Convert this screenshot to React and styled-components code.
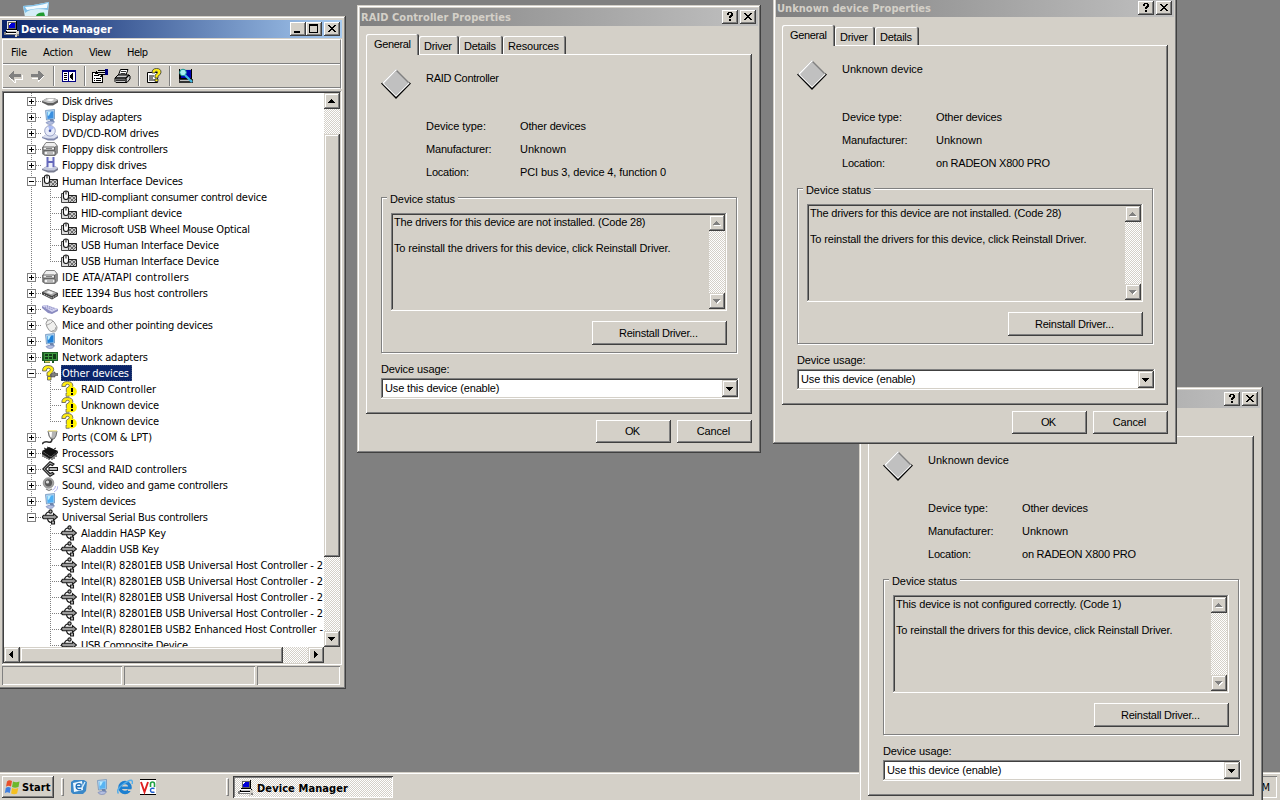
import React, { useLayoutEffect, useRef, useState } from "react";
import styled, { createGlobalStyle, css } from "styled-components";

const FACE = "#d4d0c8";
const UI = `"DejaVu Sans Condensed", "DejaVu Sans", sans-serif`;
const SANS = `"Liberation Sans", Arial, sans-serif`;

const GlobalStyle = createGlobalStyle`
  * { box-sizing: border-box; }
  html, body { margin: 0; padding: 0; height: 100%; overflow: hidden; }
  svg { display: block; flex: none; }
`;

const raised = css`
  background: ${FACE};
  box-shadow: inset -1px -1px #404040, inset 1px 1px #fff, inset -2px -2px #808080;
`;
const scrollRaised = css`
  background: ${FACE};
  box-shadow: inset -1px -1px #404040, inset 1px 1px ${FACE}, inset -2px -2px #808080, inset 2px 2px #fff;
`;
const sunken = css`
  box-shadow: inset -1px -1px #fff, inset 1px 1px #808080, inset -2px -2px ${FACE}, inset 2px 2px #404040;
`;
const checker = css`
  background: repeating-conic-gradient(#fff 0 25%, ${FACE} 0 50%) 0 0 / 2px 2px;
`;

const FitSpan = styled.span`
  display: inline-block;
  white-space: pre;
`;

const WIDTHS = {
  File: 16, Action: 30, View: 22, Help: 21,
  "Disk drives": 51,
  "Display adapters": 80,
  "DVD/CD-ROM drives": 97,
  "Floppy disk controllers": 106,
  "Floppy disk drives": 85,
  "Human Interface Devices": 121,
  "HID-compliant consumer control device": 186,
  "HID-compliant device": 101,
  "Microsoft USB Wheel Mouse Optical": 169,
  "USB Human Interface Device": 138,
  "IDE ATA/ATAPI controllers": 127,
  "IEEE 1394 Bus host controllers": 146,
  "Keyboards": 51,
  "Mice and other pointing devices": 151,
  "Monitors": 41,
  "Network adapters": 86,
  "Ports (COM & LPT)": 90,
  "Processors": 52,
  "SCSI and RAID controllers": 125,
  "Sound, video and game controllers": 166,
  "System devices": 74,
  "Universal Serial Bus controllers": 146,
  "Aladdin HASP Key": 85,
  "Aladdin USB Key": 78,
  "Intel(R) 82801EB USB Universal Host Controller - 2": 242,
  "Intel(R) 82801EB USB2 Enhanced Host Controller -": 242,
  "USB Composite Device": 107,
  "PCI bus 3, device 4, function 0": 146,
  "on RADEON X800 PRO": 114,
  "Device status": 65,
  "Device type:": 60,
  "Manufacturer:": 65.5,
  "Location:": 43,
  "Unknown": 46,
  "The drivers for this device are not installed. (Code 28)": 251.5,
  "This device is not configured correctly. (Code 1)": 225.5,
  "To reinstall the drivers for this device, click Reinstall Driver.": 276.5,
  "Reinstall Driver...": 79,
  "Device usage:": 68.5,
  "Use this device (enable)": 114.5,
  OK: 15, Cancel: 33.5,
  General: 37, Driver: 28, Details: 32, Resources: 51,
};

const Fit = ({ children, w = WIDTHS[children] }) => {
  const ref = useRef(null);
  const [spacing, setSpacing] = useState(0);
  useLayoutEffect(() => {
    if (!w) return;
    const natural = ref.current.getBoundingClientRect().width;
    setSpacing((w - natural) / (children.length - 1));
  }, [w, children]);
  return (
    <FitSpan ref={ref} style={{ letterSpacing: spacing, marginRight: -spacing }}>
      {children}
    </FitSpan>
  );
};

const Desktop = styled.main`
  position: relative;
  width: 1280px;
  height: 800px;
  overflow: hidden;
  background: #808080;
  color: #000;
  font: 11px/13px ${UI};
  white-space: nowrap;
`;

const WindowFrame = styled.section`
  position: absolute;
  isolation: isolate;
  left: ${(p) => p.$x}px;
  top: ${(p) => p.$y}px;
  width: ${(p) => p.$w}px;
  height: ${(p) => p.$h}px;
  padding: ${(p) => p.$frame}px;
  display: flex;
  flex-direction: column;
  background: ${FACE};
  box-shadow: inset -1px -1px #404040, inset 1px 1px ${FACE}, inset -2px -2px #808080, inset 2px 2px #fff;
`;

const TitleBar = styled.header`
  height: 18px;
  flex: none;
  display: flex;
  align-items: center;
  padding: 0 2px 0 ${(p) => (p.$active ? 2 : 1)}px;
  color: ${(p) => (p.$active ? "#fff" : FACE)};
  background: ${(p) =>
    p.$active ? "linear-gradient(90deg, #0a246a, #a6caf0)" : "linear-gradient(90deg, #808080, #c0c0c0)"};
`;

const TitleText = styled.span`
  flex: 1;
  margin-left: ${(p) => p.$gap || 0}px;
  font-weight: bold;
`;

const CaptionButton = styled.button`
  width: 16px;
  height: 14px;
  padding: 0;
  border: 0;
  margin-left: ${(p) => p.$gap || 0}px;
  ${raised}
`;

/* ---------- Properties dialog ---------- */

const TabStrip = styled.nav`
  display: flex;
  align-items: flex-end;
  height: 20px;
  margin: 8px 6px 0;
  font-family: ${SANS};
`;

const Tab = styled.div`
  position: relative;
  width: ${(p) => p.$w}px;
  height: ${(p) => (p.$selected ? 21 : 18)}px;
  margin-bottom: ${(p) => (p.$selected ? -1 : 0)}px;
  z-index: ${(p) => (p.$selected ? 1 : 0)};
  padding: 4px ${(p) => (p.$selected ? 0 : 2)}px 0 0;
  text-align: center;
  background: ${FACE};
  border-radius: 2px 2px 0 0;
  box-shadow: inset -1px 0 #404040, inset 1px 1px #fff, inset -2px 0 #808080;
`;

const Page = styled.div`
  width: 386px;
  height: 360px;
  margin: 0 6px;
  padding: 15px 13px 0 15px;
  font-family: ${SANS};
  ${raised}
`;

const DeviceHeader = styled.div`
  display: flex;
  gap: 15px;
  height: 30px;
  line-height: 18px;
`;

const Facts = styled.dl`
  display: grid;
  grid-template-columns: 94px 1fr;
  grid-auto-rows: 23px;
  align-items: center;
  margin: 16px 0 0;
  padding-left: 45px;
  dd { margin: 0; }
`;

const GroupBox = styled.div`
  width: 356px;
  height: 156px;
  margin-top: 13px;
  padding-left: 9px;
  border: 1px solid #808080;
  box-shadow: 1px 1px #fff, inset 1px 1px #fff;
`;

const GroupLabel = styled.div`
  width: 71px;
  margin: -5px 0 7px -4px;
  padding-left: 3px;
  background: ${FACE};
`;

const StatusBox = styled.div`
  display: flex;
  width: 336px;
  height: 98px;
  padding: 2px;
  ${sunken}
`;

const StatusText = styled.div`
  flex: 1;
  display: grid;
  grid-auto-rows: 26px;
  justify-items: start;
  padding: 1px;
`;

const ScrollColumn = styled.div`
  width: 16px;
  flex: none;
  display: flex;
  flex-direction: column;
  justify-content: space-between;
  ${checker}
`;

const ScrollButton = styled.button`
  width: 16px;
  height: ${(p) => p.$h || 16}px;
  flex: none;
  padding: 0;
  border: 0;
  ${scrollRaised}
`;

const ButtonRow = styled.div`
  display: flex;
  justify-content: flex-end;
  gap: 6px;
  margin: ${(p) => p.$m};
`;

const PushButton = styled.button`
  width: ${(p) => p.$w}px;
  height: ${(p) => p.$h}px;
  padding: 0 2px 0 0;
  border: 0;
  font: 11px/13px ${SANS};
  color: #000;
  ${raised}
`;

const FieldLabel = styled.div`
  margin: 10px 0 2px;
`;

const Combo = styled.div`
  display: flex;
  align-items: center;
  justify-content: space-between;
  width: 358px;
  height: 21px;
  padding: 2px 1px 2px 4px;
  background: #fff;
  line-height: 15px;
  ${sunken}
`;

/* ---------- Device manager ---------- */

const Rebar = styled.div`
  margin: 1px 1px 0 0;
  border: 1px solid #fff;
  border-right-color: #808080;
  box-shadow: 1px 0 #fff;
  flex: none;
`;

const MenuBar = styled.nav`
  display: flex;
  height: 24px;
  align-items: center;
  padding: 2px 0 0 8px;
  border-bottom: 1px solid #808080;
`;

const MenuItem = styled.span`
  width: ${(p) => p.$w}px;
`;

const ToolBar = styled.div`
  display: flex;
  height: 24px;
  align-items: center;
  padding-left: 4px;
  border-top: 1px solid #fff;
  border-bottom: 1px solid #808080;
`;

const ToolIcon = styled.span`
  margin-left: ${(p) => p.$gap || 0}px;
`;

const ToolDivider = styled.i`
  width: 2px;
  height: 20px;
  margin-left: ${(p) => p.$gap}px;
  border-left: 1px solid #808080;
  border-right: 1px solid #fff;
`;

const TreePane = styled.div`
  height: 574px;
  margin-top: 2px;
  padding: 2px;
  flex: none;
  display: grid;
  grid-template: 554px 16px / 320px 16px;
  ${sunken}
`;

const Tree = styled.ul`
  margin: 0;
  padding: 0;
  list-style: none;
  overflow: hidden;
  background: #fff;
`;

const TreeRow = styled.li`
  display: flex;
  height: 16px;
  line-height: 17px;
`;

const TreeLabel = styled.span`
  height: 16px;
  margin-left: 3px;
  padding: 0 1px;
  ${(p) => p.$selected && "background: #0a246a; color: #fff; outline: 1px dotted #3a4c74; outline-offset: -1px; padding-right: 3px;"}
`;

const Track = styled.div`
  display: flex;
  flex-direction: ${(p) => (p.$vertical ? "column" : "row")};
  ${checker}
`;

const Thumb = styled.div`
  ${scrollRaised}
  ${(p) => (p.$vertical ? "height: 423px; margin: 25px 0 74px;" : "width: 263px; margin-right: 25px;")}
`;

const StatusBar = styled.footer`
  display: grid;
  grid-template-columns: 120px 131px 83px;
  gap: 2px;
  height: 19px;
  margin-top: 1px;
`;

const StatusPanel = styled.div`
  box-shadow: inset 1px 1px #808080, inset -1px -1px #fff;
`;

/* ---------- Taskbar ---------- */

const TaskBar = styled.footer`
  position: absolute;
  inset: 772px 0 0 0;
  display: flex;
  align-items: center;
  padding: 2px 3px 0 2px;
  background: ${FACE};
  box-shadow: inset 0 1px ${FACE}, inset 0 2px #fff;
`;

const StartButton = styled.button`
  display: flex;
  align-items: center;
  gap: 2px;
  width: 52px;
  height: 22px;
  padding: 0 0 0 2px;
  border: 0;
  font: bold 11px/13px ${UI};
  color: #000;
  ${raised}
`;

const Grip = styled.i`
  width: 3px;
  height: 18px;
  margin-left: ${(p) => p.$gap}px;
  border: 1px solid #fff;
  border-right-color: #808080;
  border-bottom-color: #808080;
`;

const QuickLaunch = styled.div`
  display: flex;
  gap: 7px;
  margin-left: 7px;
`;

const TaskButton = styled.div`
  display: flex;
  align-items: center;
  gap: 3px;
  width: 160px;
  height: 22px;
  margin-left: 4px;
  padding: 2px 0 0 5px;
  font-weight: bold;
  ${checker}
  box-shadow: inset 1px 1px #404040, inset -1px -1px #fff, inset 2px 2px #808080;
`;

const Tray = styled.div`
  width: 90px;
  height: 22px;
  margin-left: auto;
  padding: 5px 7px 0 0;
  text-align: right;
  box-shadow: inset 1px 1px #808080, inset -1px -1px #fff;
`;

const BinSlot = styled.div`
  position: absolute;
  left: 22px;
  top: 1px;
`;

/* ---------- Drawings ---------- */

const Svg = ({ w = 16, h = w, crisp, children }) => (
  <svg width={w} height={h} viewBox={`0 0 ${w} ${h}`} shapeRendering={crisp ? "crispEdges" : "auto"}>
    {children}
  </svg>
);

const Glyph = {
  close: (
    <Svg w={16} h={14} crisp>
      <path d="M4 3h2v1h1v1h2v-1h1v-1h2v1h-1v1h-1v1h-1v1h1v1h1v1h1v1h-2v-1h-1v-1h-2v1h-1v1h-2v-1h1v-1h1v-1h1v-1h-1v-1h-1v-1h-1z" />
    </Svg>
  ),
  help: (
    <Svg w={16} h={14} crisp>
      <path d="M6 2h4v1h1v3h-1v1h-1v1h-2v-2h1v-1h1v-2h-2v2h-2v-2h1zM7 9h2v2h-2z" />
    </Svg>
  ),
  min: (
    <Svg w={16} h={14} crisp>
      <path d="M4 9h6v2h-6z" />
    </Svg>
  ),
  max: (
    <Svg w={16} h={14} crisp>
      <path d="M3 2h9v9h-9zM4 4v6h7v-6z" fillRule="evenodd" />
    </Svg>
  ),
};

const ARROWS = {
  up: "M7 6h1v1h1v1h1v1h1v1h-7v-1h1v-1h1v-1h1z",
  down: "M4 6h7v1h-1v1h-1v1h-1v1h-1v-1h-1v-1h-1v-1h-1z",
  left: "M9 4v7h-1v-1h-1v-1h-1v-1h-1v-1h1v-1h1v-1h1v-1z",
  right: "M6 4v7h1v-1h1v-1h1v-1h1v-1h-1v-1h-1v-1h-1v-1z",
};

const Arrow = ({ dir, disabled }) => (
  <Svg crisp>
    {disabled && <path d={ARROWS[dir]} fill="#fff" transform="translate(1 1)" />}
    <path d={ARROWS[dir]} fill={disabled ? "#808080" : "#000"} />
  </Svg>
);

const PcIcon = () => (
  <Svg crisp>
    <path d="M3 0h10v9h-10z" fill="#000" />
    <path d="M3 0h9v8h-9z" fill="#e8e6e0" />
    <path d="M4 1h8v7h-8z" fill="#606060" />
    <path d="M5 2h6v5h-6z" fill="#0000d8" />
    <path d="M5 2h2v1h-1v1h-1z" fill="#fff" />
    <path d="M2 9h12v5h-12z" fill="#000" />
    <path d="M2 9h11v1h-11zM1 12h11v1h-11z" fill="#fff" />
    <path d="M3 10h9v1h-9z" fill="#c0c0c0" />
    <path d="M12 10h3v4h-2v2h-2v-2h1z" fill="#d4d0c8" />
    <path d="M0 11h2v2h-2zM0 13h12v1h-12z" fill="#808080" />
    <path d="M13 13h2v2h-2z" fill="#808080" />
  </Svg>
);

const DiamondIcon = () => (
  <Svg w={30}>
    <path d="M0 14.500L15 30L30 14.500L28 13L15 26L2 13z" fill="#000" />
    <path d="M15 0L29 14L15 28L1 14z" fill="#808080" />
    <path d="M1 14L15 0L16 1L3 15z" fill="#fff" />
    <path d="M15 2L27 14L15 26L3 14z" fill="#c0c0c0" />
    <path d="M2.500 14.500L15 27L28 14" fill="none" stroke="#f4f4f4" strokeWidth="1.200" />
  </Svg>
);

const BinIcon = () => (
  <Svg w={28} h={34}>
    <path d="M1 5Q14 4 27 1L24 33H6z" fill="#d5eef7" />
    <path d="M1 5Q14 4 27 1L26 9Q10 6 3 12z" fill="#7fc0e8" />
    <path d="M3 6Q16 5 26 2L25 7Q14 7 5 9z" fill="#f2fbff" />
    <path d="M14 15q1-4 8-3.500l1 3.500h-4l-2 2z" fill="#1f9a2e" />
  </Svg>
);

const Monitor = ({ body = "#3a8fe0" }) => (
  <Svg>
    <path d="M3.500 1.500l9-1v9.500l-8 1z" fill="#b4d4f0" stroke="#6f93bb" strokeWidth=".8" />
    <path d="M5 3l6.500-.8v7l-6 .8z" fill={body} />
    <path d="M5.500 3l3.500-.4-2 4-1.300.2z" fill="#b9ecff" />
    <path d="M8 10h3l1.500 3h-4.500z" fill="#6c84ac" />
    <path d="M4 13.500q4-2.500 8.500-.5q-2 3-5 2.500q-3-.3-3.500-2z" fill="#b4bfe0" stroke="#6d7db0" strokeWidth=".6" />
  </Svg>
);

const Controller = () => (
  <Svg>
    <path d="M4 2h8l4 3v7l-3 3h-9l-4-2v-6z" fill="#8c8c8c" />
    <path d="M4 1.500h8.500l2.500 3-2.500 2h-12z" fill="#f0f0f0" stroke="#777" strokeWidth=".9" />
    <path d="M1 6h11.500v3h-11.500zM2 10h11v4h-11z" fill="#f2f2f2" stroke="#555" strokeWidth=".9" />
    <path d="M5 12h6M4 7.500h6" stroke="#777" strokeWidth=".9" />
  </Svg>
);

const ICONS = {
  disk: (
    <Svg>
      <path d="M0 8l5-3h7l4 2v2.500l-5 3h-5l-6-3z" fill="#5d5d5d" />
      <path d="M0 8l5-3h7l4 2-5 3h-5z" fill="#c0c0c0" />
      <path d="M4 7.300l3-1.300h4l1 1-3 1.300z" fill="#fff" />
    </Svg>
  ),
  display: <Monitor />,
  dvd: (
    <Svg>
      <path d="M0 12l5-3h8l3 2v2l-4 2.500h-6l-6-2.500z" fill="#8088ac" />
      <path d="M0 12l5-3h8l3 2-4 2.500h-6z" fill="#dadff0" />
      <circle cx="8" cy="5.800" r="5.300" fill="#e8ecfa" stroke="#8f99c0" strokeWidth=".9" />
      <path d="M8 6L6 1q4-1 6 2z" fill="#a8baf4" />
      <circle cx="8" cy="5.800" r="1.300" fill="#4b5aa6" />
    </Svg>
  ),
  fdc: <Controller />,
  floppy: (
    <Svg>
      <path d="M0 12l5-3h8l3 2v2l-4 2.500h-6l-6-2.500z" fill="#777b8f" />
      <path d="M0 12l5-3h8l3 2-4 2.500h-6z" fill="#c4c8dc" />
      <path d="M4.500 0h8v10h-8z" fill="#6468bc" />
      <path d="M6.500 0h4v4h-4zM6.500 6h4v5h-4z" fill="#eceefa" />
    </Svg>
  ),
  hid: (
    <Svg>
      <path d="M7 6.500h8.500v7h-8.500z" fill="#c8c8c8" stroke="#222" />
      <path d="M8 8l5 5M11 7l4 4M15 7l-6 6M11 7l-3 3M15 10l-3 3" stroke="#555" strokeWidth=".8" />
      <path d="M2 4.500h-1.500v9h7v-3" fill="#dcdcdc" stroke="#444" />
      <path d="M2.500 4q0-2 2.500-2t2.500 2v4q0 2.500-2.500 2.500t-2.500-2.500z" fill="#fff" stroke="#111" strokeWidth="1.100" />
      <path d="M5 2v3.500" stroke="#111" />
    </Svg>
  ),
  ieee: (
    <Svg>
      <path d="M0 7l6-3 10 4v3l-6 3.500-10-5z" fill="#444" />
      <path d="M1 7l5-2.500 9 3.500-5 3z" fill="#a9a9a9" />
      <path d="M4 7.300l3-1.500 5 2-3 1.500z" fill="#eee" />
      <path d="M2 9.500l8 3.500 5-3" stroke="#ddd" fill="none" strokeDasharray="1 1" />
    </Svg>
  ),
  keyboard: (
    <Svg>
      <path d="M0 5l4-1 12 4v2l-6 3-4-1-6-5z" fill="#8a8bc0" />
      <path d="M0 5l4-1 12 4-6 3z" fill="#d4d4f0" />
      <path d="M3 6l8 3M5 5l8 3" stroke="#7c7db8" strokeDasharray="1 1" />
    </Svg>
  ),
  mouse: (
    <Svg>
      <path d="M1 2q4-3 5 3" stroke="#aaa" fill="none" />
      <path d="M5 4q4-3 7 1l3 5q0 5-4 5t-6-5q-2-4 0-6z" fill="#f0f0ee" stroke="#999" />
      <path d="M5 8q4-1 6-4M14 10q0 4-4 4" stroke="#a5a5a5" fill="none" />
    </Svg>
  ),
  monitor: <Monitor body="#1f80d8" />,
  network: (
    <Svg>
      <path d="M0 3h16v9h-4v2h-2v-2h-2v2h-6v-2h-2z" fill="#1e5b25" />
      <path d="M2 4h13v7h-13z" fill="#3e9a40" />
      <path d="M3 5h3v2h-3zM7 5h3v2h-3zM3 8h3v2h-3zM11 5h3v5h-3zM7 8h3v2h-3z" fill="#123b18" />
      <path d="M3 12h5v1.500h-5z" fill="#e2d264" />
    </Svg>
  ),
  other: (
    <Svg>
      <path d="M9 8.500h2l1-1.500h1v1.500h3v2h-3v1.500h-4z" fill="#808080" stroke="#333" strokeWidth=".5" />
      <path d="M.5 6q0-5.500 5.500-5.500t5.700 4.200q0 2.300-3.200 4.300v2h-3.500v-3.500q3.300-1.300 3.300-2.800t-2-1.500-2 2.800z" fill="#ffee10" stroke="#555" strokeWidth=".8" />
      <path d="M5.500 11.500h3.500v3.500h-3.500z" fill="#ffee10" stroke="#555" strokeWidth=".8" />
    </Svg>
  ),
  unknown: (
    <Svg>
      <path d="M.8 5.500q0-5 5.400-5t5.600 4q0 2.300-3.200 4v2.300h-3.300v-3.500q3-1.500 3-2.700t-1.900-1.300-1.900 2.200z" fill="#ffee10" stroke="#555" strokeWidth=".8" />
      <path d="M5 12h3.300v3.300h-3.300z" fill="#ffee10" stroke="#555" strokeWidth=".7" />
      <circle cx="10.800" cy="10.500" r="5" fill="#fff200" />
      <path d="M10 7h2v4h-2zM10 12h2v2h-2z" fill="#000" />
    </Svg>
  ),
  ports: (
    <Svg>
      <path d="M6 2h9l-1 5-2 3h-3l-2-3z" fill="#b4b4b4" stroke="#555" strokeWidth=".8" />
      <path d="M7 3h3l-.5 5h-1z" fill="#fff" />
      <path d="M6 1h9v1.500h-9z" fill="#f2e8a0" />
      <path d="M10 10q0 4-4 3t-6 2" stroke="#333" strokeWidth="1.600" fill="none" />
    </Svg>
  ),
  cpu: (
    <Svg>
      <path d="M0 6l7-4 9 4-7 6z" fill="#111" />
      <path d="M0 6v3l8 5 8-6v-2l-7 6z" fill="#222" />
      <path d="M1 8v4M3 9v4M5 10v4M7 12v3M10 12v3M12 10v4M14 8v4" stroke="#111" />
      <path d="M4 4l-2-1M7 3l-2-1M12 4l2-1" stroke="#222" />
    </Svg>
  ),
  scsi: (
    <Svg>
      <path d="M12 3l-4-2.300-7.300 7.300 7.300 7.300 4-2.300-1.500-1.500-2.500 1-4.500-4.500 4.500-4.500 2.500 1z" fill="#a8a8a8" stroke="#1a1a1a" strokeWidth="1.100" />
      <path d="M7 6.500h8.500v3h-8.500z" fill="#b8b8b8" stroke="#1a1a1a" strokeWidth="1.100" />
    </Svg>
  ),
  sound: (
    <Svg>
      <circle cx="6.500" cy="6" r="5.300" fill="#a4a4a4" stroke="#777" strokeWidth=".6" />
      <circle cx="6.500" cy="5.800" r="3.600" fill="#585858" />
      <circle cx="5.500" cy="5" r="1.600" fill="#ddd" />
      <path d="M4 12l3 1.500 3-1.500" stroke="#888" strokeWidth="1.300" fill="none" />
      <path d="M10.500 13q3-1 3-4M12 15q4-2 4-6" stroke="#b4b4ee" fill="none" />
    </Svg>
  ),
  system: <Monitor body="#4fb1f5" />,
  usb: (
    <Svg>
      <path d="M3.500 7.500q0-4.500 4-4.500M5.500 8.500q0 5 4 5" stroke="#1a1a1a" strokeWidth="1.200" fill="none" />
      <path d="M.6 7.300l1-1h9.900v-1.700l4 3.400-4 3.400v-1.700h-9.900l-1-1z" fill="#9a9a9a" stroke="#1a1a1a" strokeWidth="1.100" />
      <circle cx="8.500" cy="2.500" r="1.600" fill="#bbb" stroke="#1a1a1a" strokeWidth="1.200" />
      <path d="M9.500 12h3v3h-3z" fill="#bbb" stroke="#1a1a1a" strokeWidth="1.100" />
    </Svg>
  ),
};

const TOOLS = {
  back: (
    <Svg crisp>
      <path d="M2 9l5 5h1v-3h7v-4" stroke="#fff" fill="none" />
      <path d="M1 8l1-1 1-1 1-1 1-1 1-1h1v3h7v3h-7v3h-1l-1-1z" fill="#808080" />
    </Svg>
  ),
  forward: (
    <Svg crisp>
      <path d="M2 10h6v4l6-6" stroke="#fff" fill="none" />
      <path d="M14 8l-1-1-1-1-1-1-1-1-1-1h-1v3h-7v3h7v3h1l1-1z" fill="#808080" />
    </Svg>
  ),
  pane: (
    <Svg crisp>
      <path d="M1 2h14v12h-14z" fill="#000080" />
      <path d="M2 4h5v9h-5zM8 4h6v9h-6z" fill="#fff" />
      <path d="M3 5h3v1h-3zM3 7h3v1h-3zM3 9h3v1h-3zM3 11h3v1h-3zM12 5v7h-1v-1h-1v-1h-1v-3h1v-1h1v-1z" fill="#000" />
    </Svg>
  ),
  props: (
    <Svg w={18} h={16} crisp>
      <path d="M1 4h11v11h-11z" fill="#000" />
      <path d="M2 5h9v9h-9z" fill="#fff" />
      <path d="M3 10h1v1h-1zM5 10h5v1h-5zM3 12h1v1h-1zM5 12h5v1h-5zM3 7h4v1h-4z" />
      <path d="M5 3h2v-1h7v5h-3v2h-2v-1h-2v-2h-3v-1h1z" fill="#000" />
      <path d="M6 3h8v1h-8zM7 5h7v1h-7zM8 7h2v1h-2z" fill="#e0e0e0" />
      <path d="M14 1h3v6h-3z" fill="#000080" />
    </Svg>
  ),
  print: (
    <Svg w={17} h={16}>
      <path d="M4.500 7l2-5.500h7.500l-2 5.500z" fill="#fff" stroke="#000" />
      <path d="M7 3.500h5M6.500 5.500h5" stroke="#000" strokeWidth=".8" />
      <path d="M1 10l3-3h11l1 1v3l-3 3.500h-11l-1-1z" fill="#c8c8c8" stroke="#000" />
      <path d="M1 10h11l3-3M12 10v4M2 12.200h9" stroke="#000" strokeWidth="1.300" fill="none" />
    </Svg>
  ),
  help: (
    <Svg w={16} h={16}>
      <path d="M1.500 4.500h10v10h-10z" fill="#fff" stroke="#000" />
      <path d="M3 8h5M3 10h4M3 12h6" stroke="#000" />
      <path d="M6 5q0-4.500 4.500-4.500t4.500 3.700q0 2.300-3 4v1.800h-3v-3q2.500-1.300 2.500-2.500t-1.200-1.200-1.300 1.700z" fill="#ffee10" stroke="#333" strokeWidth=".8" />
      <path d="M9 11h3v2.500h-3z" fill="#ffee10" stroke="#333" strokeWidth=".8" />
    </Svg>
  ),
  scan: (
    <Svg w={16} h={16}>
      <path d="M1 1h13v10h-13z" fill="#000" />
      <path d="M2 1h11v1h-11z" fill="#c0c0c0" />
      <path d="M3 2h10v8h-10z" fill="#0000b0" />
      <path d="M1 11h14v4h-14z" fill="#333" />
      <path d="M2 12h12v1h-12z" fill="#c0c0c0" />
      <circle cx="5" cy="4.500" r="3.300" fill="#a8f0f0" stroke="#189090" />
      <path d="M7 7l7 7" stroke="#40b8e0" strokeWidth="2.200" />
    </Svg>
  ),
};

const StartFlag = () => (
  <Svg w={16}>
    <path d="M3 2.500q2-2 5-.5l-1 5.500q-3-1.500-5 .3z" fill="#e8502a" />
    <path d="M9 2.500q3 1.500 6.500 0l-1 5.500q-3.500 1.500-6.500 0z" fill="#6cb82c" />
    <path d="M1.800 9q2-1.800 5-.3l-1 5.300q-3-1.500-5 .3z" fill="#3f7fe0" />
    <path d="M8 9q3 1.500 6.300 0l-1.200 5.500q-3 1.500-6 0z" fill="#f5c020" />
  </Svg>
);

const QUICK = {
  outlook: (
    <Svg w={16}>
      <path d="M0 3l3-2h10l3 2-1 9-3 3h-10l-2-2z" fill="#3a88c8" />
      <path d="M2 4l9-2 1 9-9 2z" fill="#eef8ff" />
      <path d="M9.500 5q-4.500-1-4.300 2.700t5 2.800M5.500 7.800h4.500v-3" stroke="#1f6fb8" strokeWidth="1.400" fill="none" />
      <path d="M11 9l3-6" stroke="#d8f0ff" strokeWidth="1.300" />
    </Svg>
  ),
  desktop: <Monitor body="#58b4f2" />,
  ie: (
    <Svg w={16}>
      <circle cx="8" cy="8.500" r="5" fill="none" stroke="#1c7fd0" strokeWidth="3.600" />
      <path d="M4 7.500h10v2.500h-10z" fill="#1c7fd0" />
      <path d="M11 10.300h5v1.700h-5z" fill={FACE} />
      <path d="M1.500 14.500q-3-4 5-9.500t8.500-3q1 1 0 3" stroke="#55aeea" strokeWidth="1.500" fill="none" />
    </Svg>
  ),
  vnc: (
    <Svg w={16}>
      <path d="M0 0h16v16h-16z" fill="#fff" />
      <path d="M0 .500h16M0 15.500h16" stroke="#000" />
      <path d="M1 3l3.500 10L8 3" stroke="#e02020" strokeWidth="1.900" fill="none" />
      <path d="M10.500 8v-3q0-2 2-2t2 2v3" stroke="#20a040" strokeWidth="1.600" fill="none" />
      <path d="M14.500 9.500q-4-1-4 1.700t4 2" stroke="#2060d0" strokeWidth="1.500" fill="none" />
    </Svg>
  ),
};

/* ---------- Tree ---------- */

const HOST = "Intel(R) 82801EB USB Universal Host Controller - 2";
const TREE = [
  ["disk", "Disk drives"],
  ["display", "Display adapters"],
  ["dvd", "DVD/CD-ROM drives"],
  ["fdc", "Floppy disk controllers"],
  ["floppy", "Floppy disk drives"],
  ["hid", "Human Interface Devices", [
    "HID-compliant consumer control device",
    "HID-compliant device",
    "Microsoft USB Wheel Mouse Optical",
    "USB Human Interface Device",
    "USB Human Interface Device",
  ]],
  ["fdc", "IDE ATA/ATAPI controllers"],
  ["ieee", "IEEE 1394 Bus host controllers"],
  ["keyboard", "Keyboards"],
  ["mouse", "Mice and other pointing devices"],
  ["monitor", "Monitors"],
  ["network", "Network adapters"],
  ["other", "Other devices", ["RAID Controller", "Unknown device", "Unknown device"], "unknown"],
  ["ports", "Ports (COM & LPT)"],
  ["cpu", "Processors"],
  ["scsi", "SCSI and RAID controllers"],
  ["sound", "Sound, video and game controllers"],
  ["system", "System devices"],
  ["usb", "Universal Serial Bus controllers", [
    "Aladdin HASP Key",
    "Aladdin USB Key",
    HOST,
    HOST,
    HOST,
    HOST,
    "Intel(R) 82801EB USB2 Enhanced Host Controller -",
    "USB Composite Device",
  ]],
];
const TREE_WIDTHS = { "Other devices": 67, "RAID Controller": 75, "Unknown device": 78 };

const Dots = ({ d }) => <path d={d} stroke="#808080" strokeDasharray="1 1" fill="none" />;

const Branch = ({ open, last }) => (
  <Svg w={38} h={16} crisp>
    <Dots d={last ? "M27.500 0V8" : "M27.500 0V16"} />
    <Dots d="M28 8.500H38" />
    <path d="M23.500 4.500h8v8h-8z" fill="#fff" stroke="#808080" />
    <path d={open ? "M25 8.500h5" : "M25 8.500h5M27.500 6v5"} stroke="#000" />
  </Svg>
);

const Twig = ({ trunk, last }) => (
  <Svg w={57} h={16} crisp>
    {trunk && <Dots d="M27.500 0V16" />}
    <Dots d={last ? "M46.500 0V8" : "M46.500 0V16"} />
    <Dots d="M46 8.500H57" />
  </Svg>
);

const DeviceTree = () => (
  <Tree>
    {TREE.map(([icon, label, children, childIcon], i) => {
      const last = i === TREE.length - 1;
      return (
        <React.Fragment key={label}>
          <TreeRow>
            <Branch open={!!children} last={last} />
            {ICONS[icon]}
            <TreeLabel $selected={icon === "other"}>
              <Fit w={TREE_WIDTHS[label]}>{label}</Fit>
            </TreeLabel>
          </TreeRow>
          {(children || []).map((name, j) => (
            <TreeRow key={j}>
              <Twig trunk={!last} last={!last && j === children.length - 1} />
              {ICONS[childIcon || icon]}
              <TreeLabel>
                <Fit w={TREE_WIDTHS[name]}>{name}</Fit>
              </TreeLabel>
            </TreeRow>
          ))}
        </React.Fragment>
      );
    })}
  </Tree>
);

const DeviceManager = () => (
  <WindowFrame $x={-2} $y={16} $w={348} $h={673} $frame={4}>
    <TitleBar $active>
      <PcIcon />
      <TitleText $gap={1}><Fit w={91}>Device Manager</Fit></TitleText>
      <CaptionButton>{Glyph.min}</CaptionButton>
      <CaptionButton>{Glyph.max}</CaptionButton>
      <CaptionButton $gap={2}>{Glyph.close}</CaptionButton>
    </TitleBar>
    <Rebar>
      <MenuBar>
        <MenuItem $w={32}><Fit>File</Fit></MenuItem>
        <MenuItem $w={46}><Fit>Action</Fit></MenuItem>
        <MenuItem $w={38}><Fit>View</Fit></MenuItem>
        <MenuItem $w={40}><Fit>Help</Fit></MenuItem>
      </MenuBar>
      <ToolBar>
        <ToolIcon>{TOOLS.back}</ToolIcon>
        <ToolIcon $gap={7}>{TOOLS.forward}</ToolIcon>
        <ToolDivider $gap={7} />
        <ToolIcon $gap={6}>{TOOLS.pane}</ToolIcon>
        <ToolDivider $gap={7} />
        <ToolIcon $gap={5}>{TOOLS.props}</ToolIcon>
        <ToolIcon $gap={5}>{TOOLS.print}</ToolIcon>
        <ToolDivider $gap={7} />
        <ToolIcon $gap={6}>{TOOLS.help}</ToolIcon>
        <ToolDivider $gap={7} />
        <ToolIcon $gap={7}>{TOOLS.scan}</ToolIcon>
      </ToolBar>
    </Rebar>
    <TreePane>
      <DeviceTree />
      <Track $vertical>
        <ScrollButton><Arrow dir="up" /></ScrollButton>
        <Thumb $vertical />
        <ScrollButton><Arrow dir="down" /></ScrollButton>
      </Track>
      <Track>
        <ScrollButton><Arrow dir="left" /></ScrollButton>
        <Thumb />
        <ScrollButton><Arrow dir="right" /></ScrollButton>
      </Track>
    </TreePane>
    <StatusBar>
      <StatusPanel />
      <StatusPanel />
      <StatusPanel />
    </StatusBar>
  </WindowFrame>
);

const TAB_WIDTHS = { General: 53, Driver: 40, Details: 44, Resources: 63 };

const PropertiesDialog = ({ x, y, device, nameWidth, titleWidth, tabs, location, status }) => (
  <WindowFrame $x={x} $y={y} $w={404} $h={448} $frame={3}>
    <TitleBar>
      <TitleText><Fit w={titleWidth}>{device + " Properties"}</Fit></TitleText>
      <CaptionButton>{Glyph.help}</CaptionButton>
      <CaptionButton $gap={2}>{Glyph.close}</CaptionButton>
    </TitleBar>
    <TabStrip>
      {tabs.map((t) => (
        <Tab key={t} $w={TAB_WIDTHS[t]} $selected={t === "General"}><Fit>{t}</Fit></Tab>
      ))}
    </TabStrip>
    <Page>
      <DeviceHeader>
        <DiamondIcon />
        <Fit w={nameWidth}>{device}</Fit>
      </DeviceHeader>
      <Facts>
        <dt><Fit>Device type:</Fit></dt>
        <dd><Fit w={66}>Other devices</Fit></dd>
        <dt><Fit>Manufacturer:</Fit></dt>
        <dd><Fit>Unknown</Fit></dd>
        <dt><Fit>Location:</Fit></dt>
        <dd><Fit>{location}</Fit></dd>
      </Facts>
      <GroupBox>
        <GroupLabel><Fit>Device status</Fit></GroupLabel>
        <StatusBox>
          <StatusText>
            <Fit>{status}</Fit>
            <Fit>To reinstall the drivers for this device, click Reinstall Driver.</Fit>
          </StatusText>
          <ScrollColumn>
            <ScrollButton><Arrow dir="up" disabled /></ScrollButton>
            <ScrollButton><Arrow dir="down" disabled /></ScrollButton>
          </ScrollColumn>
        </StatusBox>
        <ButtonRow $m="10px 9px 0 0">
          <PushButton $w={135} $h={24}><Fit>Reinstall Driver...</Fit></PushButton>
        </ButtonRow>
      </GroupBox>
      <FieldLabel><Fit>Device usage:</Fit></FieldLabel>
      <Combo>
        <Fit>Use this device (enable)</Fit>
        <ScrollButton $h={17}><Arrow dir="down" /></ScrollButton>
      </Combo>
    </Page>
    <ButtonRow $m="6px 6px 0 0">
      <PushButton $w={75} $h={23}><Fit>OK</Fit></PushButton>
      <PushButton $w={75} $h={23}><Fit>Cancel</Fit></PushButton>
    </ButtonRow>
  </WindowFrame>
);

export default function App() {
  return (
    <Desktop>
      <GlobalStyle />
      <BinSlot><BinIcon /></BinSlot>
      <DeviceManager />
      <TaskBar>
        <StartButton><StartFlag /><Fit w={28.5}>Start</Fit></StartButton>
        <Grip $gap={7} />
        <QuickLaunch>
          {QUICK.outlook}
          {QUICK.desktop}
          {QUICK.ie}
          {QUICK.vnc}
        </QuickLaunch>
        <Grip $gap={70} />
        <TaskButton><PcIcon /><Fit w={91}>Device Manager</Fit></TaskButton>
        <Tray>4:16 PM</Tray>
      </TaskBar>
      <PropertiesDialog
        x={859}
        y={387}
        device="Unknown device"
        nameWidth={81}
        titleWidth={154}
        tabs={["General", "Driver", "Details"]}
        location="on RADEON X800 PRO"
        status="This device is not configured correctly. (Code 1)"
      />
      <PropertiesDialog
        x={357}
        y={5}
        device="RAID Controller"
        nameWidth={73}
        titleWidth={150}
        tabs={["General", "Driver", "Details", "Resources"]}
        location="PCI bus 3, device 4, function 0"
        status="The drivers for this device are not installed. (Code 28)"
      />
      <PropertiesDialog
        x={773}
        y={-4}
        device="Unknown device"
        nameWidth={81}
        titleWidth={154}
        tabs={["General", "Driver", "Details"]}
        location="on RADEON X800 PRO"
        status="The drivers for this device are not installed. (Code 28)"
      />
    </Desktop>
  );
}
